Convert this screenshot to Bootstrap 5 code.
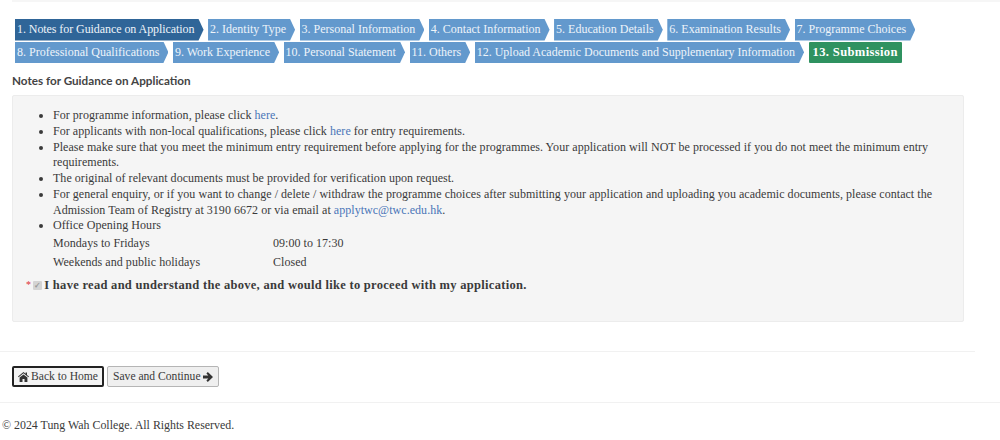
<!DOCTYPE html>
<html lang="en">
<head>
<meta charset="utf-8">
<title>Notes for Guidance on Application</title>
<link rel="stylesheet" href="https://cdn.jsdelivr.net/npm/bootstrap@5.3.0/dist/css/bootstrap.min.css">
<style>
html,body{height:440px;overflow:hidden;background:#fff}
body{font-family:"Liberation Serif",serif;font-size:12px;line-height:15.75px;color:#3a3a3a;letter-spacing:.04px;font-variant-numeric:oldstyle-nums}
a{color:#4a76b8;text-decoration:none}
.top-rule{height:2px;background:#f6f6f6;margin-left:12px}
.wizard{padding:17px 0 0 15px;width:960px;column-gap:4.5px;row-gap:1px}
.stepper{height:21.5px;line-height:21.5px;padding:0 9.1px 0 2px;background:#6399cd;color:#eef4fa;font-size:12px;letter-spacing:0;white-space:nowrap;clip-path:polygon(0 0,calc(100% - 5px) 0,100% 50%,calc(100% - 5px) 100%,0 100%)}
.stepper.now{background:#2f6598;letter-spacing:-.07px}
.stepper.last{background:#2f9260;color:#fff;font-weight:700;clip-path:none;border-radius:1px;padding:0 4px;font-size:12.6px;letter-spacing:.34px}
.page-title{font-family:Lato,"Liberation Sans",sans-serif;font-weight:700;font-size:11.7px;line-height:15px;margin:10px 0 7px 12px;color:#444;letter-spacing:0}
.notes{margin:0 36px 0 12px;height:227px;background:#f5f5f5;border:1px solid #ececec;border-radius:2px;padding:12px 0 0}
.notes ul{margin:0;padding:0 24px 0 40px}
.hours{margin:0 0 0 40px;line-height:19px}
.hours>div:first-child{width:220px}
.agree{margin:3px 0 0 13px;font-size:12.5px;font-weight:700;letter-spacing:.29px;line-height:20px;gap:2px}
.req{color:#d33;font-weight:400;font-size:10px}
.tick{width:9px;height:9px;background:#d4d4d4;border-radius:1px;color:#999;font-size:8px;line-height:9px;text-align:center}
.rule-a{height:1px;background:#f1f1f1;margin:29px 25px 0 0}
.actions{padding:14px 0 0 12px;gap:3px}
.plainbtn{font-size:11.6px;line-height:15px;height:21px;padding:2px 5px;background:#efefef;border:1px solid #b5b5b5;border-radius:2px;color:#3a3a3a;letter-spacing:0;display:inline-flex;align-items:center;gap:2px}
.plainbtn.focused{border:2px solid #222;background:#f3f3f3;padding:1px 4px}
.rule-b{height:1px;background:#f1f1f1;margin-top:15px}
.legal{padding:15px 0 0 2px;font-size:11.9px;letter-spacing:0}
</style>
</head>
<body>
<div class="top-rule"></div>
<div class="wizard d-flex flex-wrap">
  <div class="stepper now">1. Notes for Guidance on Application</div>
  <div class="stepper">2. Identity Type</div>
  <div class="stepper">3. Personal Information</div>
  <div class="stepper">4. Contact Information</div>
  <div class="stepper">5. Education Details</div>
  <div class="stepper">6. Examination Results</div>
  <div class="stepper">7. Programme Choices</div>
  <div class="stepper">8. Professional Qualifications</div>
  <div class="stepper">9. Work Experience</div>
  <div class="stepper">10. Personal Statement</div>
  <div class="stepper">11. Others</div>
  <div class="stepper">12. Upload Academic Documents and Supplementary Information</div>
  <div class="stepper last">13. Submission</div>
</div>
<h1 class="page-title">Notes for Guidance on Application</h1>
<div class="notes">
  <ul>
    <li>For programme information, please click <a href="#">here</a>.</li>
    <li>For applicants with non-local qualifications, please click <a href="#">here</a> for entry requirements.</li>
    <li>Please make sure that you meet the minimum entry requirement before applying for the programmes. Your application will NOT be processed if you do not meet the minimum entry requirements.</li>
    <li>The original of relevant documents must be provided for verification upon request.</li>
    <li>For general enquiry, or if you want to change / delete / withdraw the programme choices after submitting your application and uploading you academic documents, please contact the Admission Team of Registry at 3190 6672 or via email at <a href="#">applytwc@twc.edu.hk</a>.</li>
    <li>Office Opening Hours</li>
  </ul>
  <div class="hours d-flex"><div>Mondays to Fridays</div><div>09:00 to 17:30</div></div>
  <div class="hours d-flex"><div>Weekends and public holidays</div><div>Closed</div></div>
  <div class="agree d-flex align-items-center"><span class="req">*</span><span class="tick">&#10003;</span><span>I have read and understand the above, and would like to proceed with my application.</span></div>
</div>
<div class="rule-a"></div>
<div class="actions d-flex">
  <button type="button" class="plainbtn focused"><svg width="11" height="10" viewBox="0 0 11 10" aria-hidden="true"><path fill="#333" d="M5.5 0 0 4.600l.6.7L5.5 1.200l4.900 4.100.6-.7L9 2.900V.6H7.600v1.100zM1.600 5.600V10h2.900V7h2v3h2.900V5.600L5.500 2.400z"/></svg>Back to Home</button>
  <button type="button" class="plainbtn">Save and Continue<svg width="10" height="10" viewBox="0 0 10 10" aria-hidden="true"><path fill="#333" d="M4.800 0 10 5 4.800 10 3.400 8.600 5.300 6.600H0V3.400h5.300L3.400 1.400z"/></svg></button>
</div>
<div class="rule-b"></div>
<div class="legal">&copy; 2024 Tung Wah College. All Rights Reserved.</div>
</body>
</html>
